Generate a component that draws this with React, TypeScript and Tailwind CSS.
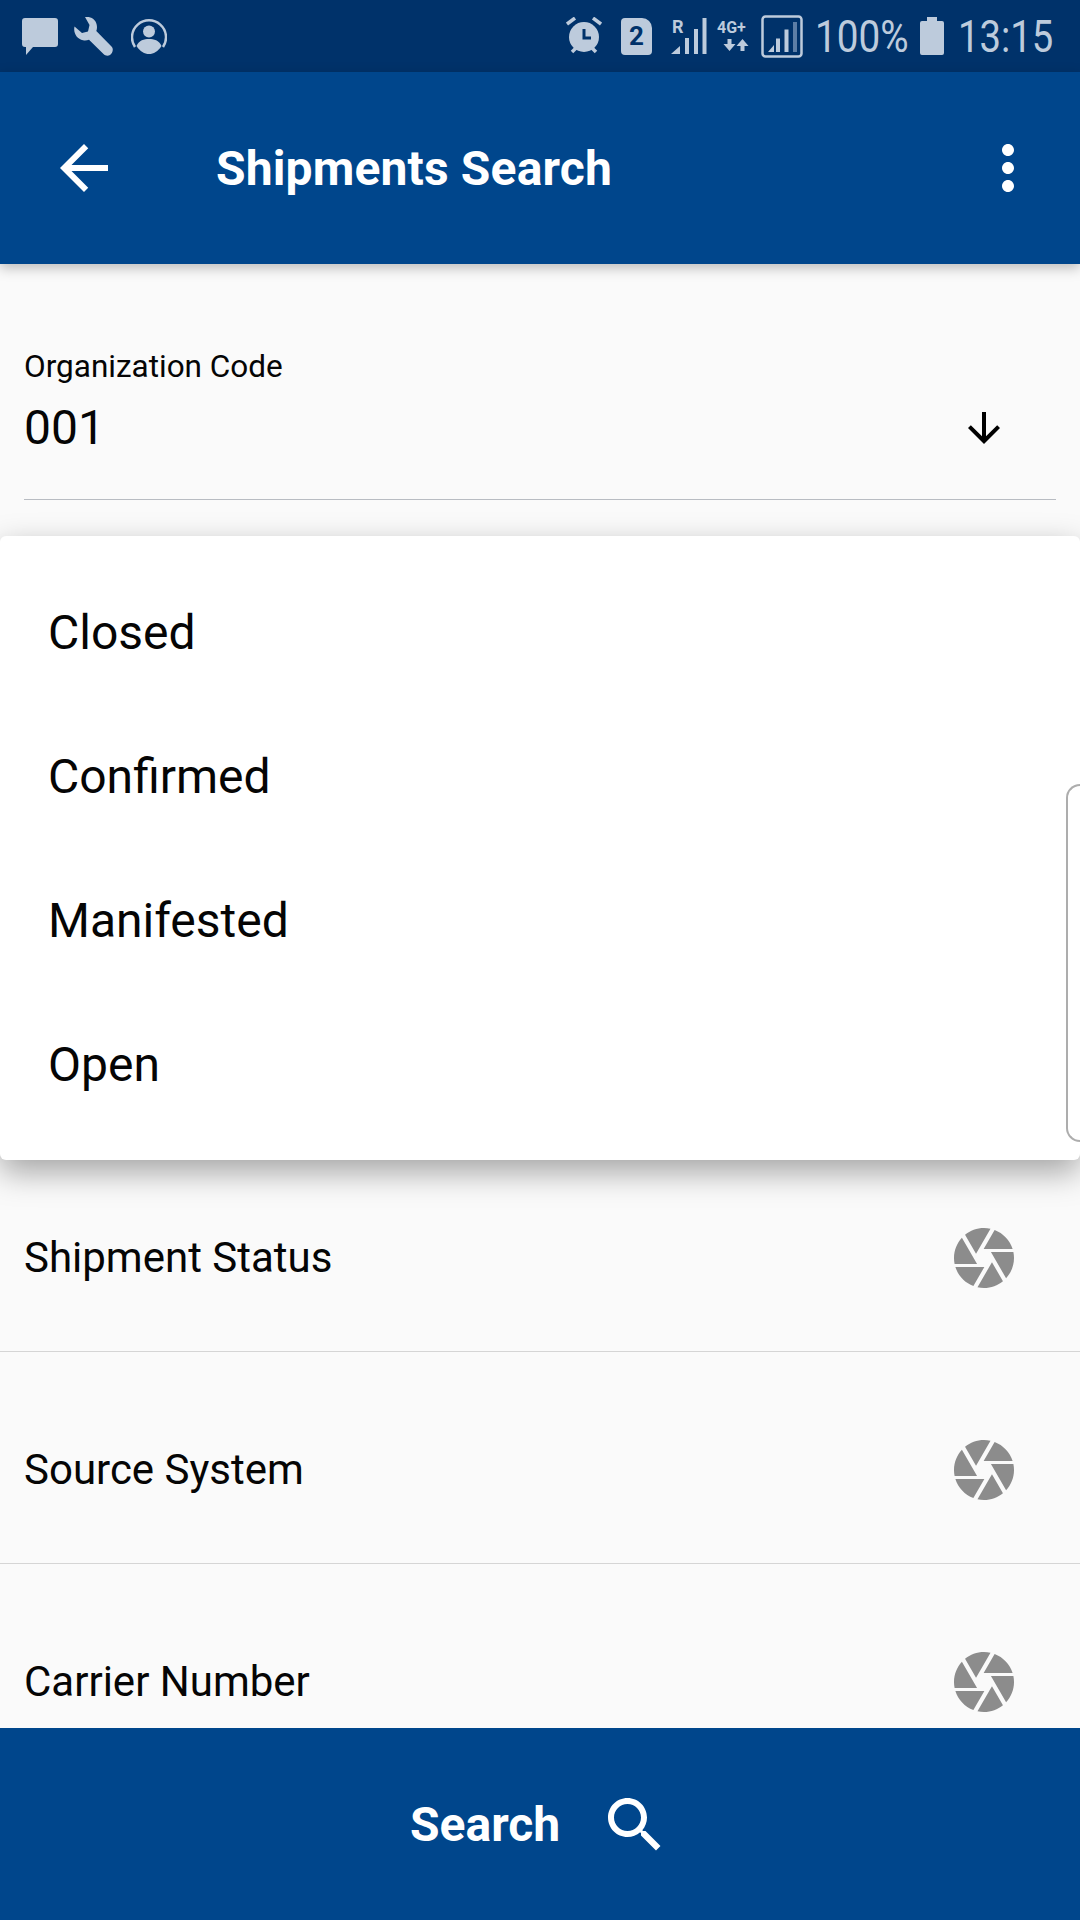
import React from 'react';

const statusColor = '#bdcbdc';

const cameraPath =
  'M9.4 10.5l4.77-8.26C13.47 2.09 12.75 2 12 2c-2.4 0-4.6.85-6.32 2.25l3.66 6.35.06-.1zM21.54 9c-.92-2.92-3.15-5.26-6-6.34L11.88 9h9.66zm.26 1h-7.49l.29.5 4.76 8.25C21 16.97 22 14.61 22 12c0-.69-.07-1.35-.2-2zM8.54 12l-3.9-6.75C3.01 7.03 2 9.39 2 12c0 .69.07 1.35.2 2h7.49l-1.15-2zm-6.08 3c.92 2.92 3.15 5.26 6 6.34L12.12 15H2.46zm11.27 0l-3.9 6.76c.7.15 1.42.24 2.17.24 2.4 0 4.6-.85 6.32-2.25l-3.66-6.35-.93 1.6z';

const Icon = ({ d, size, className }: { d: string; size: number; className?: string }) => (
  <svg width={size} height={size} viewBox="0 0 24 24" fill="currentColor" className={className}>
    <path d={d} />
  </svg>
);

const StatusLeft = () => (
  <div className="flex items-center">
    <svg width="36" height="37" viewBox="0 0 36 37" fill={statusColor} className="ml-[22px]">
      <path d="M3 0h30a3 3 0 0 1 3 3v23a3 3 0 0 1-3 3H11l-7 8v-8H3a3 3 0 0 1-3-3V3a3 3 0 0 1 3-3z" />
    </svg>
    <svg width="40" height="39" viewBox="0 0 40 39" fill="none" className="ml-[16px]">
      <path
        d="M11 0 C17 -1 23 3 23 10 C23 12 22.600 13 22.300 14 L37.500 29.500 C40 32 38.500 36.500 36 38 C33.500 39.500 31 38.500 29.500 37 L15 22.800 C13 23.500 11 23.800 9 23.300 C3 22 -1 16 0.500 9.500 L8 16 L14 14.500 L15.500 8 Z"
        fill={statusColor}
      />
    </svg>
    <svg width="36" height="36" viewBox="0 0 36 36" fill="none" className="ml-[17px]">
      <path d="M4 29 A17 17 0 1 1 32 29" stroke={statusColor} strokeWidth="2.500" />
      <circle cx="18" cy="13.500" r="6" fill={statusColor} />
      <path d="M5.500 28 C8 22 13 21 18 21 C23 21 28 22 30.500 28 C27 33.500 22.500 36 18 36 C13.500 36 9 33.500 5.500 28 Z" fill={statusColor} />
    </svg>
  </div>
);

const StatusRight = () => (
  <div className="flex items-center">
    <svg width="36" height="38" viewBox="0 0 36 38" className="mr-[19px]">
      <circle cx="18" cy="20" r="15" fill={statusColor} />
      <path d="M1 7 L9 1 M35 7 L27 1 M6 35 L10 31 M30 35 L26 31" stroke={statusColor} strokeWidth="3.500" />
      <path d="M18 12 V21 H25" stroke="#00326a" strokeWidth="3" fill="none" />
    </svg>
    <div className="mr-[19px] flex h-[37px] w-[31px] items-center justify-center rounded-[4px] rounded-tr-[10px] bg-[#bdcbdc] text-[26px] font-bold leading-none text-[#00326a]">
      2
    </div>
    <svg width="36" height="36" viewBox="0 0 36 36" fill={statusColor} className="mr-[10px] overflow-visible">
      <text x="1" y="15" fontFamily="Roboto" fontWeight="700" fontSize="18">
        R
      </text>
      <path d="M0 36 L9 28 V36 Z" />
      <rect x="14" y="20" width="4" height="16" />
      <rect x="23" y="11" width="4" height="25" />
      <rect x="31.500" y="0" width="4" height="36" />
    </svg>
    <svg width="36" height="36" viewBox="0 0 36 36" fill={statusColor} className="mr-[8px] overflow-visible">
      <text x="0" y="15" fontFamily="Roboto" fontWeight="700" fontSize="16">
        4G+
      </text>
      <path d="M10.500 21h4v5h4l-6 7 -6 -7h4z" />
      <path d="M23.500 33h4v-5h4l-6 -7 -6 7h4z" />
    </svg>
    <svg width="42" height="43" viewBox="0 0 42 43" fill={statusColor} className="mr-[12px]">
      <rect x="1.500" y="1.500" width="39" height="40" rx="3" fill="none" stroke={statusColor} strokeWidth="2.500" />
      <path d="M7 37 L13 30 V37 Z" />
      <rect x="15" y="23.500" width="4" height="13.500" />
      <rect x="23.500" y="14.500" width="4" height="22.500" />
      <rect x="32" y="7" width="4" height="30" fill="#5d7ea6" />
    </svg>
    <span className="inline-block w-[92px] origin-left scale-x-[0.86] whitespace-nowrap text-[45px] leading-none text-[#bdcbdc]">
      100%
    </span>
    <svg width="24" height="38" viewBox="0 0 24 38" fill={statusColor} className="ml-[13px]">
      <path d="M7 0h10v4h5a2 2 0 0 1 2 2v30a2 2 0 0 1-2 2H2a2 2 0 0 1-2-2V6a2 2 0 0 1 2-2h5z" />
    </svg>
    <span className="ml-[14px] mr-[27px] inline-block w-[95px] origin-left scale-x-[0.85] whitespace-nowrap text-[45px] leading-none text-[#bdcbdc]">
      13:15
    </span>
  </div>
);

const PickerRow = ({ label }: { label: string }) => (
  <div className="flex h-[212px] shrink-0 items-center justify-between border-b border-[#d5d5d5] pl-6 pr-[60px] pt-6">
    <span className="text-[42px] text-[#050505]">{label}</span>
    <Icon d={cameraPath} size={72} className="text-[#8c8c8c]" />
  </div>
);

const options = ['Closed', 'Confirmed', 'Manifested', 'Open'];

export default function App() {
  return (
    <div className="relative flex h-[1920px] w-[1080px] flex-col overflow-hidden bg-[#fafafa] font-['Roboto',sans-serif]">
      <div className="flex h-[72px] shrink-0 items-center justify-between bg-[#00326a]">
        <StatusLeft />
        <StatusRight />
      </div>

      <header className="z-10 flex h-[192px] shrink-0 items-center bg-[#00468c] text-white shadow-[0_4px_12px_rgba(0,0,0,0.25)]">
        <Icon
          d="M20 11H7.830l5.590-5.590L12 4l-8 8 8 8 1.410-1.410L7.830 13H20v-2z"
          size={72}
          className="ml-12"
        />
        <h1 className="ml-24 flex-1 pt-px text-[48px] font-bold tracking-[0.15px]">Shipments Search</h1>
        <Icon
          d="M12 8c1.100 0 2-.9 2-2s-.9-2-2-2-2 .9-2 2 .9 2 2 2zm0 2c-1.100 0-2 .9-2 2s.9 2 2 2 2-.9 2-2-.9-2-2-2zm0 6c-1.100 0-2 .9-2 2s.9 2 2 2 2-.9 2-2-.9-2-2-2z"
          size={72}
          className="mr-9"
        />
      </header>

      <main className="flex-1 overflow-hidden">
        <div className="mx-6 h-[236px] border-b border-[#b8bcc2] pt-[85px]">
          <div className="text-[31.5px] leading-9 text-[#050505]">Organization Code</div>
          <div className="mt-[15px] flex items-center justify-between pr-12">
            <span className="text-[48px] leading-[56px] text-[#050505]">001</span>
            <Icon d="M20 12l-1.410-1.410L13 16.170V4h-2v12.170l-5.580-5.590L4 12l8 8 8-8z" size={48} className="text-black" />
          </div>
        </div>
        <div className="h-[640px]" />
        <PickerRow label="Shipment Status" />
        <PickerRow label="Source System" />
        <PickerRow label="Carrier Number" />
      </main>

      <footer className="flex h-[192px] shrink-0 items-center bg-[#00468c] pl-[410px] pt-px text-white">
        <span className="text-[48px] font-bold">Search</span>
        <Icon
          d="M15.500 14h-.79l-.28-.27C15.410 12.590 16 11.110 16 9.500 16 5.910 13.090 3 9.500 3S3 5.910 3 9.500 5.910 16 9.500 16c1.610 0 3.090-.59 4.230-1.570l.27.28v.79l5 4.990L20.490 19l-4.990-5zm-6 0C7.010 14 5 11.990 5 9.500S7.010 5 9.500 5 14 7.010 14 9.500 11.990 14 9.500 14z"
          size={72}
          className="ml-[39px]"
        />
      </footer>

      {/* dropdown menu over the form */}
      <div className="absolute left-0 top-[536px] z-20 flex h-[624px] w-full flex-col rounded-[6px] bg-white pb-6 pt-[25px] shadow-[0_12px_32px_rgba(0,0,0,0.35)]">
        {options.map((option) => (
          <div key={option} className="flex h-36 shrink-0 items-center pl-12 text-[48px] text-[#050505]">
            {option}
          </div>
        ))}
      </div>

      {/* edge panel handle from the phone */}
      <div className="absolute right-0 top-[784px] z-30 h-[358px] w-[14px] rounded-l-[16px] border-y-2 border-l-2 border-[#adadad]" />
    </div>
  );
}
